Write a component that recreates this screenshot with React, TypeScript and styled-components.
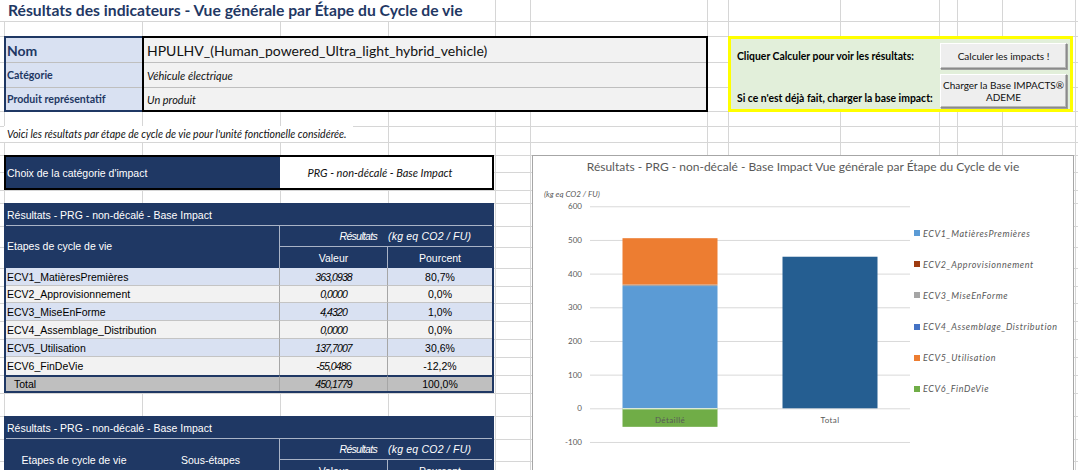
import React from "react";
import styled, { createGlobalStyle } from "styled-components";

const NAVY = "#1F3864";
const HEAD_LINE = "#A9B3C6";
const GRID = "#D6D6D6";
const CHART_TEXT = "#595959";

const VLINES = [4, 142, 280, 388, 495, 530, 707, 728, 840, 939, 957, 1002, 1075];
const HLINES = [21, 36, 62, 87, 111, 126, 142, 155, 172, 190, 203, 226, 247, 268, 286, 303, 321, 339, 357, 375, 393, 416, 439, 461];

const gridBackground = [
  ...VLINES.map(
    (x) => `linear-gradient(to right, transparent ${x}px, ${GRID} ${x}px, ${GRID} ${x + 1}px, transparent ${x + 1}px)`
  ),
  ...HLINES.map(
    (y) => `linear-gradient(to bottom, transparent ${y}px, ${GRID} ${y}px, ${GRID} ${y + 1}px, transparent ${y + 1}px)`
  ),
].join(",\n");

const GlobalStyle = createGlobalStyle`
  html, body { margin: 0; padding: 0; background: #ffffff; }
  body { font-family: "Lato", "Liberation Sans", sans-serif; }
  *, *::before, *::after { box-sizing: border-box; }
`;

const Sheet = styled.main`
  width: 1078px;
  height: 470px;
  overflow: hidden;
  background-color: #ffffff;
  background-image: ${gridBackground};
  display: flex;
  flex-direction: column;
`;

/* ---------- Title ---------- */
const TitleRow = styled.header`
  flex: none;
  height: 21px;
  display: flex;
  padding-left: 4px;
`;

const Title = styled.h1`
  margin: 0;
  padding: 0 6px 0 4px;
  background: #ffffff;
  font: 700 15.7px/21px "Lato", sans-serif;
  color: ${NAVY};
  white-space: nowrap;
`;

/* ---------- Top: product box + actions ---------- */
const TopSection = styled.section`
  flex: none;
  margin-top: 15px;
  height: 76px;
  display: flex;
  padding-left: 4px;
`;

const ProductBox = styled.div`
  width: 704px;
  display: flex;
`;

const ProductLabels = styled.div`
  width: 138px;
  background: #d9e1f2;
  border: 2px solid ${NAVY};
  border-right: none;
  display: flex;
  flex-direction: column;
`;

const ProductValues = styled.div`
  flex: 1;
  background: #f2f2f2;
  border: 2px solid #000000;
  display: flex;
  flex-direction: column;
`;

const ProductCell = styled.div<{ $h: number; $last?: boolean; $pad: number }>`
  height: ${(p) => p.$h}px;
  border-bottom: ${(p) => (p.$last ? "none" : "1px solid #bfbfbf")};
  display: flex;
  align-items: center;
  padding-left: ${(p) => p.$pad}px;
  white-space: nowrap;
  overflow: hidden;
`;

const LabelText = styled.span<{ $big?: boolean }>`
  font: 700 ${(p) => (p.$big ? "14px" : "10.6px")} "Lato", sans-serif;
  color: ${NAVY};
`;

const ValueText = styled.span<{ $big?: boolean }>`
  font: ${(p) => (p.$big ? "400 14px" : "italic 400 11px")} "Lato", sans-serif;
  color: #111111;
`;

const ActionBox = styled.div`
  margin-left: 20px;
  width: 345px;
  border: 3px solid #ffff00;
  background: #e2efda;
  display: grid;
  grid-template-columns: 1fr 127px;
  grid-template-rows: 26px 34px;
  row-gap: 5px;
  padding: 4px 3px 0 6px;
`;

const ActionText = styled.span<{ $bottom?: boolean }>`
  align-self: ${(p) => (p.$bottom ? "end" : "center")};
  padding-bottom: ${(p) => (p.$bottom ? "4px" : "0")};
  font: 700 10.4px "Lato", sans-serif;
  color: #000000;
  white-space: nowrap;
`;

const SheetButton = styled.button`
  margin: 0;
  padding: 0;
  font: 400 10px/12px "Lato", sans-serif;
  color: #111111;
  background: #eeeeee;
  border: 1px solid;
  border-color: #ffffff #8a8a8a #8a8a8a #ffffff;
  box-shadow: inset -1px -1px 0 #b8b8b8, 1px 1px 0 #a0a0a0;
  text-align: center;
  white-space: nowrap;
  cursor: pointer;
`;

/* ---------- Note ---------- */
const NoteRow = styled.div`
  flex: none;
  margin-top: 14px;
  height: 16px;
  display: flex;
  padding-left: 4px;
`;

const Note = styled.p`
  margin: 0;
  padding: 0 6px 0 3px;
  background: #ffffff;
  font: italic 400 10.5px/16px "Lato", sans-serif;
  color: #111111;
  white-space: nowrap;
`;

/* ---------- Lower section ---------- */
const LowerSection = styled.section`
  flex: 1;
  min-height: 0;
  margin-top: 13px;
  display: flex;
  align-items: flex-start;
  padding-left: 4px;
`;

const LeftColumn = styled.div`
  flex: none;
  width: 490px;
  display: flex;
  flex-direction: column;
`;

const ChoiceBox = styled.div`
  height: 35px;
  border: 2px solid #000000;
  display: grid;
  grid-template-columns: 274px 1fr;
`;

const ChoiceLabel = styled.div`
  background: ${NAVY};
  color: #ffffff;
  display: flex;
  align-items: center;
  padding-left: 1px;
  font: 400 10.5px "Liberation Sans", Arial, sans-serif;
  white-space: nowrap;
`;

const ChoiceValue = styled.div`
  background: #ffffff;
  display: flex;
  align-items: center;
  justify-content: center;
  padding-right: 12px;
  font: italic 400 11px "Lato", sans-serif;
  color: #111111;
  white-space: nowrap;
`;

const ResultTable = styled.div<{ $mt: number }>`
  margin-top: ${(p) => p.$mt}px;
  border: 2px solid ${NAVY};
  display: grid;
  grid-template-columns: 136px 138px 108px 104px;
  font: 400 10.5px "Liberation Sans", Arial, sans-serif;
`;

const HeadCell = styled.div`
  background: ${NAVY};
  color: #ffffff;
  height: 21px;
  display: flex;
  align-items: center;
  white-space: nowrap;
`;

const TableCaption = styled(HeadCell)`
  grid-column: 1 / -1;
  padding-left: 1px;
  border-bottom: 1px solid ${HEAD_LINE};
`;

const StageHead = styled(HeadCell)<{ $span: number; $center?: boolean; $divider?: boolean }>`
  grid-column: span ${(p) => p.$span};
  grid-row: span 2;
  height: 42px;
  justify-content: ${(p) => (p.$center ? "center" : "flex-start")};
  padding-left: ${(p) => (p.$center ? "0" : "1px")};
  padding-bottom: ${(p) => (p.$center ? "0" : "3px")};
  border-right: ${(p) => (p.$divider ? `1px solid ${HEAD_LINE}` : "none")};
`;

const UnitHead = styled(HeadCell)<{ $side: "left" | "right" }>`
  justify-content: ${(p) => (p.$side === "right" ? "flex-end" : "flex-start")};
  padding-right: ${(p) => (p.$side === "right" ? "11px" : "0")};
  font-style: italic;
  letter-spacing: ${(p) => (p.$side === "right" ? "-0.7px" : "0.2px")};
  border-bottom: 1px solid ${HEAD_LINE};
`;

const ColumnHead = styled(HeadCell)<{ $divider?: boolean }>`
  justify-content: center;
  border-right: ${(p) => (p.$divider ? `1px solid ${HEAD_LINE}` : "none")};
`;

type Tone = "odd" | "even" | "total";
const toneBg: Record<Tone, string> = { odd: "#d9e1f2", even: "#f2f2f2", total: "#bfbfbf" };

const BodyCell = styled.div<{ $tone: Tone; $h: number; $last?: boolean }>`
  height: ${(p) => p.$h}px;
  background: ${(p) => toneBg[p.$tone]};
  border-top: ${(p) => (p.$tone === "total" ? `2px solid ${NAVY}` : "none")};
  border-bottom: ${(p) => (p.$tone === "total" || p.$last ? "none" : "1px solid #c4c4c4")};
  display: flex;
  align-items: center;
  color: #000000;
  white-space: nowrap;
`;

const StageCell = styled(BodyCell)`
  grid-column: span 2;
  padding-left: ${(p) => (p.$tone === "total" ? "8px" : "1px")};
  border-right: 1px solid #a6a6a6;
`;

const AmountCell = styled(BodyCell)`
  justify-content: center;
  font-style: italic;
  letter-spacing: -0.9px;
  border-right: 1px solid #a6a6a6;
`;

const ShareCell = styled(BodyCell)`
  justify-content: center;
`;

/* ---------- Chart ---------- */
const ChartFrame = styled.figure`
  flex: none;
  margin: 0 0 0 38px;
  width: 542px;
  height: 330px;
  border: 1px solid #a6a6a6;
  background: #ffffff;
  display: flex;
  flex-direction: column;
`;

const ChartTitle = styled.figcaption`
  height: 29px;
  padding-top: 4px;
  text-align: center;
  font: 400 12px/14px "Lato", sans-serif;
  color: ${CHART_TEXT};
  white-space: nowrap;
`;

const ChartBody = styled.div`
  display: flex;
`;

const Plot = styled.svg`
  flex: none;
  display: block;
  font-family: "Lato", sans-serif;
`;

const Legend = styled.ul`
  list-style: none;
  margin: 0;
  padding: 43px 0 0 1px;
  display: flex;
  flex-direction: column;
  gap: 19.2px;
`;

const LegendItem = styled.li`
  height: 12px;
  display: flex;
  align-items: center;
  gap: 3px;
  font: italic 400 9px "Lato", sans-serif;
  letter-spacing: 0.6px;
  color: ${CHART_TEXT};
  white-space: nowrap;
`;

const Swatch = styled.span<{ $color: string }>`
  width: 6px;
  height: 6px;
  flex: none;
  background: ${(p) => p.$color};
`;

/* ---------- Data ---------- */
const SERIES = [
  { name: "ECV1_MatièresPremières", color: "#5B9BD5", value: 363.0938, amount: "363,0938", share: "80,7%" },
  { name: "ECV2_Approvisionnement", color: "#9E3B0F", value: 0, amount: "0,0000", share: "0,0%" },
  { name: "ECV3_MiseEnForme", color: "#A5A5A5", value: 4.432, amount: "4,4320", share: "1,0%" },
  { name: "ECV4_Assemblage_Distribution", color: "#4472C4", value: 0, amount: "0,0000", share: "0,0%" },
  { name: "ECV5_Utilisation", color: "#ED7D31", value: 137.7007, amount: "137,7007", share: "30,6%" },
  { name: "ECV6_FinDeVie", color: "#70AD47", value: -55.0486, amount: "-55,0486", share: "-12,2%" },
];
const ROW_HEIGHTS = [18, 17, 18, 18, 18, 18];
const TOTAL = { value: 450.1779, amount: "450,1779", share: "100,0%" };

const ZERO_Y = 224.3;
const PX_PER_UNIT = 0.3367;
const yOf = (v: number) => ZERO_Y - v * PX_PER_UNIT;
const TICKS = [600, 500, 400, 300, 200, 100, 0, -100];
const BAR_W = 95;

function ResultsChart() {
  let pos = 0;
  let neg = 0;
  const segments = SERIES.filter((s) => s.value !== 0).map((s) => {
    let from: number;
    let to: number;
    if (s.value >= 0) {
      from = pos;
      to = pos + s.value;
      pos = to;
    } else {
      from = neg;
      to = neg + s.value;
      neg = to;
    }
    const top = yOf(Math.max(from, to));
    const bottom = yOf(Math.min(from, to));
    return { ...s, top, height: bottom - top };
  });

  return (
    <ChartFrame>
      <ChartTitle>Résultats - PRG - non-décalé - Base Impact Vue générale par Étape du Cycle de vie</ChartTitle>
      <ChartBody>
        <Plot width={380} height={300} viewBox="0 0 380 300">
          <text x={11} y={13} fontSize={8} fontStyle="italic" fill={CHART_TEXT}>
            (kg eq CO2 / FU)
          </text>
          {TICKS.map((t) => (
            <g key={t}>
              <line x1={57} x2={377} y1={yOf(t) + 0.5} y2={yOf(t) + 0.5} stroke="#D9D9D9" strokeWidth={1} />
              <text x={49} y={yOf(t) + 3} fontSize={8} textAnchor="end" fill={CHART_TEXT}>
                {t}
              </text>
            </g>
          ))}
          {segments.map((s) => (
            <rect key={s.name} x={137 - BAR_W / 2} y={s.top} width={BAR_W} height={s.height} fill={s.color} />
          ))}
          <line x1={137 - BAR_W / 2} x2={137 + BAR_W / 2} y1={ZERO_Y + 0.5} y2={ZERO_Y + 0.5} stroke="#ffffff" strokeWidth={1} />
          <rect x={297 - BAR_W / 2} y={yOf(TOTAL.value)} width={BAR_W} height={TOTAL.value * PX_PER_UNIT} fill="#255E91" />
          <text x={137} y={239} fontSize={8} textAnchor="middle" fill={CHART_TEXT} letterSpacing={0.4}>
            Détaillé
          </text>
          <text x={297} y={239} fontSize={8} textAnchor="middle" fill={CHART_TEXT} letterSpacing={0.4}>
            Total
          </text>
        </Plot>
        <Legend>
          {SERIES.map((s) => (
            <LegendItem key={s.name}>
              <Swatch $color={s.color} />
              {s.name}
            </LegendItem>
          ))}
        </Legend>
      </ChartBody>
    </ChartFrame>
  );
}

export default function App() {
  return (
    <>
      <GlobalStyle />
      <Sheet>
        <TitleRow>
          <Title>Résultats des indicateurs - Vue générale par Étape du Cycle de vie</Title>
        </TitleRow>

        <TopSection>
          <ProductBox>
            <ProductLabels>
              <ProductCell $h={25} $pad={1}>
                <LabelText $big>Nom</LabelText>
              </ProductCell>
              <ProductCell $h={25} $pad={1}>
                <LabelText>Catégorie</LabelText>
              </ProductCell>
              <ProductCell $h={22} $pad={1} $last>
                <LabelText>Produit représentatif</LabelText>
              </ProductCell>
            </ProductLabels>
            <ProductValues>
              <ProductCell $h={25} $pad={3}>
                <ValueText $big>HPULHV_(Human_powered_Ultra_light_hybrid_vehicle)</ValueText>
              </ProductCell>
              <ProductCell $h={25} $pad={3}>
                <ValueText>Véhicule électrique</ValueText>
              </ProductCell>
              <ProductCell $h={22} $pad={3} $last>
                <ValueText>Un produit</ValueText>
              </ProductCell>
            </ProductValues>
          </ProductBox>

          <ActionBox>
            <ActionText>Cliquer Calculer pour voir les résultats:</ActionText>
            <SheetButton type="button">Calculer les impacts !</SheetButton>
            <ActionText $bottom>Si ce n'est déjà fait, charger la base impact:</ActionText>
            <SheetButton type="button">
              Charger la Base IMPACTS®
              <br />
              ADEME
            </SheetButton>
          </ActionBox>
        </TopSection>

        <NoteRow>
          <Note>Voici les résultats par étape de cycle de vie pour l'unité fonctionelle considérée.</Note>
        </NoteRow>

        <LowerSection>
          <LeftColumn>
            <ChoiceBox>
              <ChoiceLabel>Choix de la catégorie d'impact</ChoiceLabel>
              <ChoiceValue>PRG - non-décalé - Base Impact</ChoiceValue>
            </ChoiceBox>

            <ResultTable $mt={13}>
              <TableCaption>Résultats - PRG - non-décalé - Base Impact</TableCaption>
              <StageHead $span={2} $divider>
                Etapes de cycle de vie
              </StageHead>
              <UnitHead $side="right">Résultats</UnitHead>
              <UnitHead $side="left">(kg eq CO2 / FU)</UnitHead>
              <ColumnHead $divider>Valeur</ColumnHead>
              <ColumnHead>Pourcent</ColumnHead>
              {SERIES.map((s, i) => {
                const tone: Tone = i % 2 === 0 ? "odd" : "even";
                const last = i === SERIES.length - 1;
                return (
                  <React.Fragment key={s.name}>
                    <StageCell $tone={tone} $h={ROW_HEIGHTS[i]} $last={last}>
                      {s.name}
                    </StageCell>
                    <AmountCell $tone={tone} $h={ROW_HEIGHTS[i]} $last={last}>
                      {s.amount}
                    </AmountCell>
                    <ShareCell $tone={tone} $h={ROW_HEIGHTS[i]} $last={last}>
                      {s.share}
                    </ShareCell>
                  </React.Fragment>
                );
              })}
              <StageCell $tone="total" $h={16}>
                Total
              </StageCell>
              <AmountCell $tone="total" $h={16}>
                {TOTAL.amount}
              </AmountCell>
              <ShareCell $tone="total" $h={16}>
                {TOTAL.share}
              </ShareCell>
            </ResultTable>

            <ResultTable $mt={23}>
              <TableCaption>Résultats - PRG - non-décalé - Base Impact</TableCaption>
              <StageHead $span={1} $center>
                Etapes de cycle de vie
              </StageHead>
              <StageHead $span={1} $center $divider>
                Sous-étapes
              </StageHead>
              <UnitHead $side="right">Résultats</UnitHead>
              <UnitHead $side="left">(kg eq CO2 / FU)</UnitHead>
              <ColumnHead $divider>Valeur</ColumnHead>
              <ColumnHead>Pourcent</ColumnHead>
            </ResultTable>
          </LeftColumn>

          <ResultsChart />
        </LowerSection>
      </Sheet>
    </>
  );
}
